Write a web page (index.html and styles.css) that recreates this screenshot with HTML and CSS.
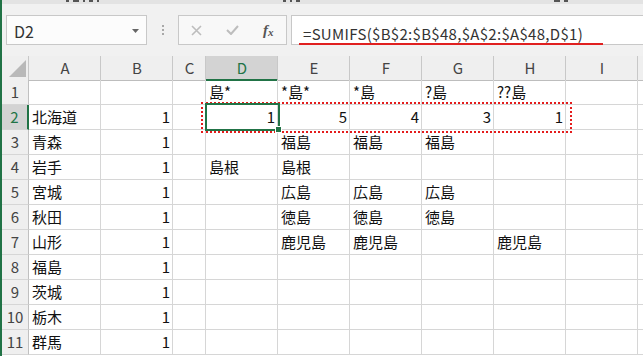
FILE: index.html
```html
<!DOCTYPE html>
<html lang="ja">
<head>
    <meta charset="UTF-8">
    <title>SUMIFS ワイルドカード</title>
    <link rel="stylesheet" href="styles.css">
</head>
<body>
<div class="app">
    <!-- リボンの下端（文字の切れ端だけが見える） -->
    <div class="ribbon-edge">
        <i class="mark w3"></i><i class="mark w6"></i><i class="mark w2"></i><i class="mark w4"></i><i class="mark w2"></i>
        <i class="mark gap w3"></i><i class="mark w2"></i><i class="mark w4"></i>
        <i class="mark gap-r w6"></i><i class="mark w4"></i>
    </div>

    <!-- 数式バー -->
    <div class="formula-bar">
        <div class="name-box">
            <span>D2</span>
            <svg width="7" height="4" viewBox="0 0 7 4"><path d="M0 0h7L3.5 4z" fill="#666"/></svg>
        </div>
        <div class="grip"><i></i><i></i><i></i></div>
        <div class="fx-buttons">
            <span class="fx-btn">
                <svg width="11" height="11" viewBox="0 0 11 11"><path d="M1 1l9 9M10 1l-9 9" stroke="#bdbdbd" stroke-width="1.6" fill="none"/></svg>
            </span>
            <span class="fx-btn">
                <svg width="13" height="10" viewBox="0 0 13 10"><path d="M1 5l4 4 7-8" stroke="#bdbdbd" stroke-width="2" fill="none"/></svg>
            </span>
            <span class="fx-btn fx-label"><em>f</em><small>x</small></span>
        </div>
        <div class="formula-input">
            <span class="formula">=SUMIFS($B$2:$B$48,$A$2:$A$48,D$1)</span>
        </div>
    </div>

    <!-- シート -->
    <div class="sheet">
        <div class="row head">
            <div class="cell corner">
                <svg width="17" height="17" viewBox="0 0 17 17"><path d="M17 0V17H0z" fill="#b9b9b9"/></svg>
            </div>
            <div class="cell">A</div><div class="cell">B</div><div class="cell">C</div>
            <div class="cell sel">D</div><div class="cell">E</div><div class="cell">F</div>
            <div class="cell">G</div><div class="cell">H</div><div class="cell">I</div>
            <div class="cell"></div>
        </div>
        <div class="row">
            <div class="cell num">1</div>
            <div class="cell"></div><div class="cell"></div><div class="cell"></div>
            <div class="cell">島*</div><div class="cell">*島*</div><div class="cell">*島</div>
            <div class="cell">?島</div><div class="cell">??島</div><div class="cell"></div><div class="cell"></div>
        </div>
        <div class="row">
            <div class="cell num sel">2</div>
            <div class="cell">北海道</div><div class="cell n">1</div><div class="cell"></div>
            <div class="cell n">1</div><div class="cell n">5</div><div class="cell n">4</div>
            <div class="cell n">3</div><div class="cell n">1</div><div class="cell"></div><div class="cell"></div>
        </div>
        <div class="row">
            <div class="cell num">3</div>
            <div class="cell">青森</div><div class="cell n">1</div><div class="cell"></div>
            <div class="cell"></div><div class="cell">福島</div><div class="cell">福島</div>
            <div class="cell">福島</div><div class="cell"></div><div class="cell"></div><div class="cell"></div>
        </div>
        <div class="row">
            <div class="cell num">4</div>
            <div class="cell">岩手</div><div class="cell n">1</div><div class="cell"></div>
            <div class="cell">島根</div><div class="cell">島根</div><div class="cell"></div>
            <div class="cell"></div><div class="cell"></div><div class="cell"></div><div class="cell"></div>
        </div>
        <div class="row">
            <div class="cell num">5</div>
            <div class="cell">宮城</div><div class="cell n">1</div><div class="cell"></div>
            <div class="cell"></div><div class="cell">広島</div><div class="cell">広島</div>
            <div class="cell">広島</div><div class="cell"></div><div class="cell"></div><div class="cell"></div>
        </div>
        <div class="row">
            <div class="cell num">6</div>
            <div class="cell">秋田</div><div class="cell n">1</div><div class="cell"></div>
            <div class="cell"></div><div class="cell">徳島</div><div class="cell">徳島</div>
            <div class="cell">徳島</div><div class="cell"></div><div class="cell"></div><div class="cell"></div>
        </div>
        <div class="row">
            <div class="cell num">7</div>
            <div class="cell">山形</div><div class="cell n">1</div><div class="cell"></div>
            <div class="cell"></div><div class="cell">鹿児島</div><div class="cell">鹿児島</div>
            <div class="cell"></div><div class="cell">鹿児島</div><div class="cell"></div><div class="cell"></div>
        </div>
        <div class="row">
            <div class="cell num">8</div>
            <div class="cell">福島</div><div class="cell n">1</div><div class="cell"></div>
            <div class="cell"></div><div class="cell"></div><div class="cell"></div>
            <div class="cell"></div><div class="cell"></div><div class="cell"></div><div class="cell"></div>
        </div>
        <div class="row">
            <div class="cell num">9</div>
            <div class="cell">茨城</div><div class="cell n">1</div><div class="cell"></div>
            <div class="cell"></div><div class="cell"></div><div class="cell"></div>
            <div class="cell"></div><div class="cell"></div><div class="cell"></div><div class="cell"></div>
        </div>
        <div class="row">
            <div class="cell num">10</div>
            <div class="cell">栃木</div><div class="cell n">1</div><div class="cell"></div>
            <div class="cell"></div><div class="cell"></div><div class="cell"></div>
            <div class="cell"></div><div class="cell"></div><div class="cell"></div><div class="cell"></div>
        </div>
        <div class="row">
            <div class="cell num">11</div>
            <div class="cell">群馬</div><div class="cell n">1</div><div class="cell"></div>
            <div class="cell"></div><div class="cell"></div><div class="cell"></div>
            <div class="cell"></div><div class="cell"></div><div class="cell"></div><div class="cell"></div>
        </div>

        <!-- コピー範囲の点線とアクティブセル -->
        <div class="copy-marquee"></div>
        <div class="active-cell"><span class="fill-handle"></span></div>
    </div>
</div>
</body>
</html>
```

FILE: styles.css
```css
/* 基本 */
body {
    margin: 0;
    overflow: hidden;
    background: #fff;
}

.app {
    width: 643px;
    height: 356px;
    overflow: hidden;
    box-sizing: border-box;
    border-left: 2px solid #217346;
    font-family: "Noto Sans CJK JP", "Noto Sans", sans-serif;
    color: #111;
}

/* リボンの下端 */
.ribbon-edge {
    height: 4px;
    background: #e3e3e3;
    display: flex;
    align-items: flex-start;
    padding-left: 64px;
}

.mark {
    height: 2px;
    margin-right: 4px;
    background: #555;
}

.w2 { width: 2px; }
.w3 { width: 3px; }
.w4 { width: 4px; }
.w6 { width: 6px; }

.gap { margin-left: 180px; }
.gap-r { margin-left: 250px; }

/* 数式バー */
.formula-bar {
    display: flex;
    align-items: flex-start;
    height: 52px;
    box-sizing: border-box;
    padding-top: 11px;
    background: #f1f1f1;
}

.name-box {
    margin-left: 4px;
    width: 141px;
    height: 30px;
    box-sizing: border-box;
    border: 1px solid #c8c8c8;
    background: #fcfcfc;
    display: flex;
    align-items: center;
    justify-content: space-between;
    padding: 1px 7px 0 7px;
    font-size: 16px;
    color: #333;
}

.grip {
    width: 31px;
    display: flex;
    flex-direction: column;
    align-items: center;
    gap: 2px;
    padding-top: 10px;
}

.grip i {
    width: 2px;
    height: 2px;
    background: #a8a8a8;
}

.fx-buttons {
    width: 109px;
    height: 30px;
    box-sizing: border-box;
    border: 1px solid #c8c8c8;
    background: #f8f8f8;
    display: flex;
}

.fx-btn {
    width: 36px;
    display: flex;
    align-items: center;
    justify-content: center;
}

.fx-label {
    font-family: "Liberation Serif", serif;
    color: #555;
    font-size: 15px;
    font-weight: bold;
}

.fx-label em {
    font-style: italic;
}

.fx-label small {
    font-size: 11px;
    font-style: italic;
    margin-top: 4px;
}

.formula-input {
    flex: 1;
    margin-left: 4px;
    height: 30px;
    box-sizing: border-box;
    border: 1px solid #c8c8c8;
    border-right: none;
    background: #fff;
    padding: 5px 0 0 7px;
}

.formula {
    display: inline-block;
    font-size: 15px;
    letter-spacing: 0.3px;
    line-height: 16px;
    padding: 0 20px 1px 4px;
    border-bottom: 2px solid #e02020;
    color: #333;
    white-space: nowrap;
}

/* シート */
.sheet {
    position: relative;
}

.row {
    display: grid;
    grid-template-columns: 27px 72px 72px 33px 72px 72px 72px 72px 72px 72px 1fr;
    height: 25px;
}

.cell {
    box-sizing: border-box;
    border-right: 1px solid #d6d6d6;
    border-bottom: 1px solid #d6d6d6;
    padding: 0 2px 0 3px;
    font-size: 15px;
    line-height: 24px;
    white-space: nowrap;
}

.n {
    text-align: right;
}

/* 列見出し */
.head {
    height: 24px;
}

.head .cell {
    background: #efefef;
    border-right-color: #c8c8c8;
    border-bottom-color: #bdbdbd;
    text-align: center;
    line-height: 23px;
    color: #444;
}

.head .corner {
    display: flex;
    align-items: flex-end;
    justify-content: flex-end;
    padding: 0 2px 3px 0;
}

.head .sel {
    background: #d3d3d3;
    color: #217346;
    border-bottom: 2px solid #217346;
}

/* 行番号 */
.num {
    background: #efefef;
    border-right-color: #c0c0c0;
    text-align: center;
    padding: 0;
    color: #444;
}

.num.sel {
    background: #d3d3d3;
    color: #217346;
    border-right: 2px solid #217346;
}

/* コピー範囲 */
.copy-marquee {
    position: absolute;
    left: 199px;
    top: 46px;
    width: 371px;
    height: 31px;
    box-sizing: border-box;
    border: 2px dotted #e41c1c;
}

/* アクティブセル */
.active-cell {
    position: absolute;
    left: 203px;
    top: 47px;
    width: 75px;
    height: 28px;
    box-sizing: border-box;
    border: 2px solid #217346;
}

.fill-handle {
    position: absolute;
    right: -4px;
    bottom: -4px;
    width: 5px;
    height: 5px;
    background: #217346;
    border: 1px solid #fff;
}
```
